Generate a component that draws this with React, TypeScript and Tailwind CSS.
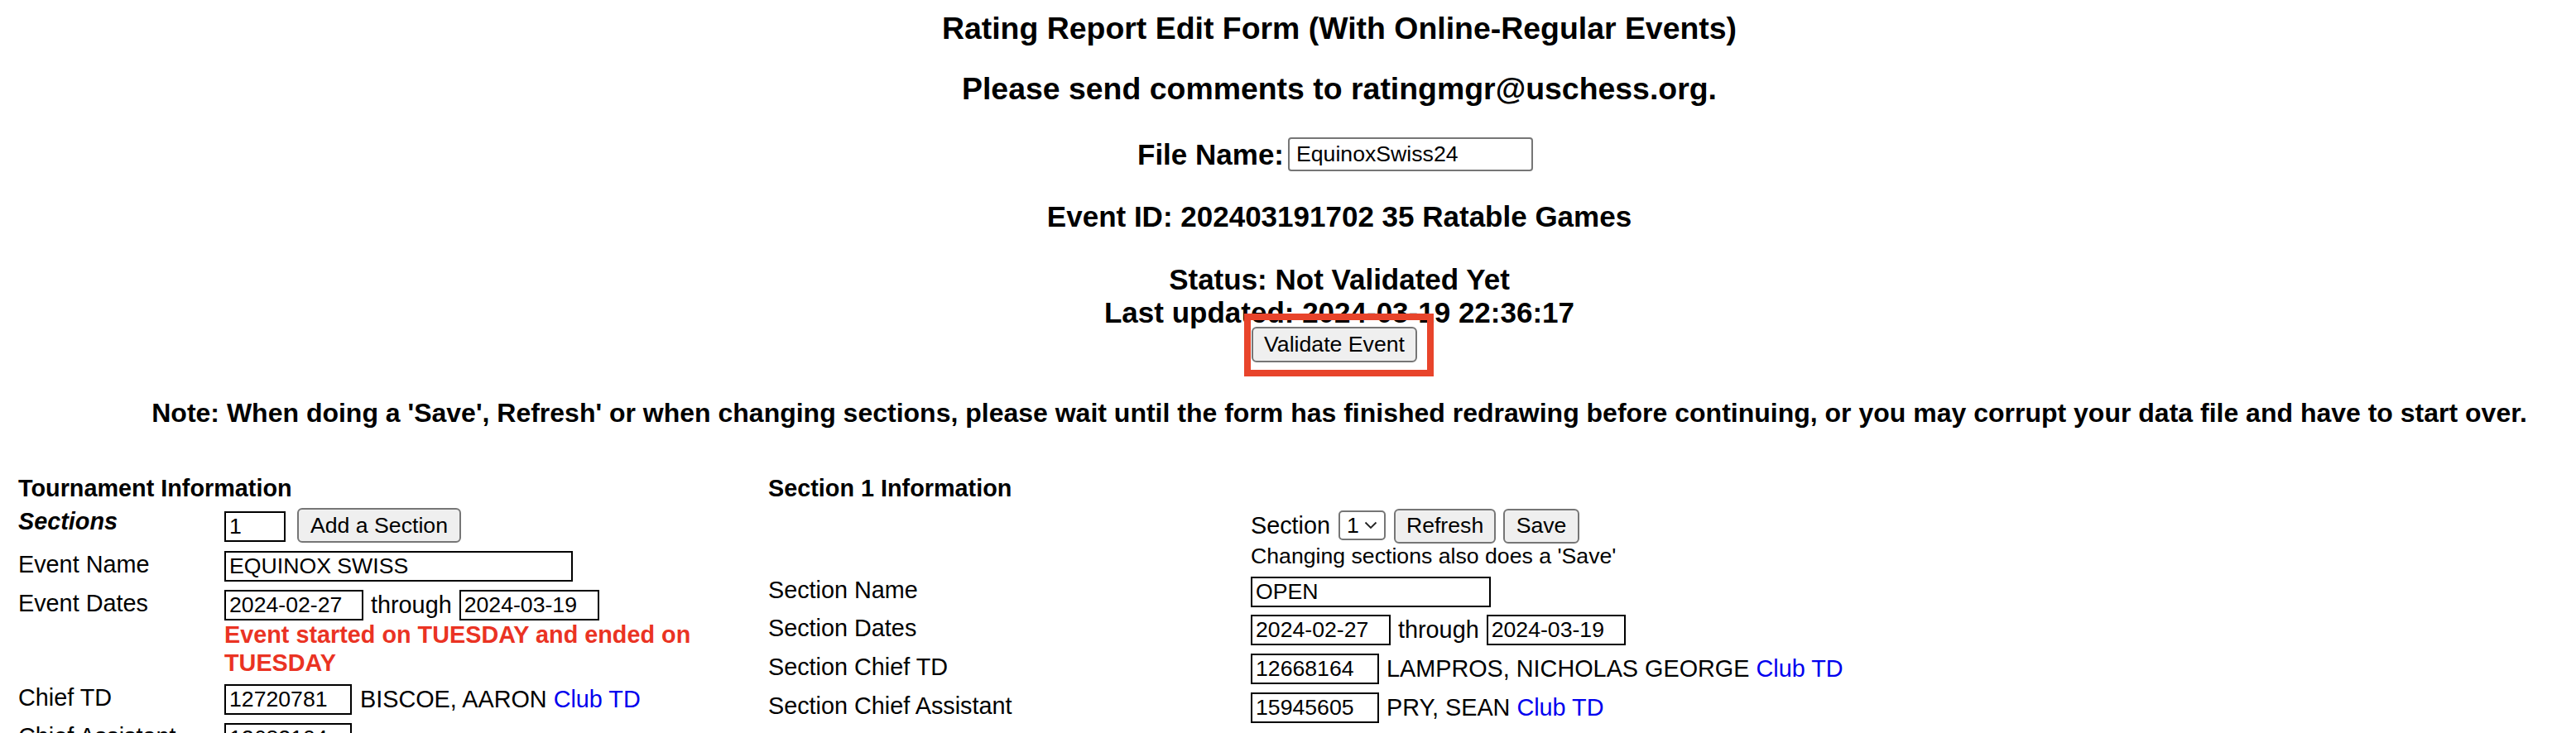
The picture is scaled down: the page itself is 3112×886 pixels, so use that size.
import React from 'react';

type BoxProps = { value: string; w: string };

// square black-bordered text box used throughout the rating form tables
function Box({ value, w }: BoxProps) {
  return (
    <input
      readOnly
      value={value}
      className={`${w} h-[37px] shrink-0 border-2 border-black bg-white px-[4px] text-[26.67px] leading-none text-black outline-none`}
    />
  );
}

function Btn({ label, w }: { label: string; w: string }) {
  return (
    <button className={`${w} h-[42px] shrink-0 rounded-[6px] border-2 border-[#767676] bg-[#efefef] text-[26.67px] leading-none text-black`}>
      {label}
    </button>
  );
}

function Label({ children, w }: { children: React.ReactNode; w: string }) {
  return <div className={`${w} shrink-0 text-[28.8px] leading-[33px]`}>{children}</div>;
}

function Club() {
  return <span className="text-[#0000ee]"> Club TD</span>;
}

export default function App() {
  return (
    <div className="relative h-[886px] w-full overflow-hidden bg-white text-black font-['Liberation_Sans',Arial,sans-serif]">
      <div className="w-[3236px]">
        {/* header block, centred */}
        <div className="flex flex-col items-center pt-[13px] font-bold">
          <h3 className="text-[37.44px] leading-[43px]">Rating Report Edit Form (With Online-Regular Events)</h3>
          <h3 className="mt-[30px] text-[37.44px] leading-[43px]">Please send comments to ratingmgr@uschess.org.</h3>
          <div className="mt-[37px] mr-[10px] flex h-[41px] items-center gap-[5px]">
            <span className="text-[35px] leading-[40px]">File Name:</span>
            <input
              readOnly
              value="EquinoxSwiss24"
              className="h-[41px] w-[296px] rounded-[4px] border-2 border-[#767676] px-[8px] text-[26.67px] font-normal outline-none"
            />
          </div>
          <div className="mt-[35px] text-[35px] leading-[40px]">Event ID: 202403191702 35 Ratable Games</div>
          <div className="mt-[36px] text-[35px] leading-[40px]">Status: Not Validated Yet</div>
          <div className="text-[35px] leading-[40px]">Last updated: 2024-03-19 22:36:17</div>
          <button className="mt-[-3px] mr-[12px] h-[43px] w-[200px] rounded-[6px] border-2 border-[#767676] bg-[#efefef] text-[26.67px] font-normal leading-none">
            Validate Event
          </button>
          <h4 className="mt-[43px] text-[32px] leading-[37px]">
            Note: When doing a 'Save', Refresh' or when changing sections, please wait until the form has finished redrawing before continuing, or you may corrupt your data file and have to start over.
          </h4>
        </div>

        {/* tournament / section tables */}
        <div className="mt-[56px] flex pl-[22px]">
          <div className="w-[905px] shrink-0">
            <div className="text-[28.8px] font-bold leading-[33px]">Tournament Information</div>
            <div className="mt-[7px] flex h-[42px] items-start">
              <Label w="w-[249px]">
                <span className="font-bold italic">Sections</span>
              </Label>
              <div className="flex items-center gap-[14px]">
                <div className="mt-[3px]">
                  <Box value="1" w="w-[74px]" />
                </div>
                <Btn label="Add a Section" w="w-[198px]" />
              </div>
            </div>
            <div className="mt-[10px] flex items-start">
              <Label w="w-[249px]">Event Name</Label>
              <Box value="EQUINOX SWISS" w="w-[421px]" />
            </div>
            <div className="mt-[10px] flex items-start">
              <Label w="w-[249px]">Event Dates</Label>
              <div className="w-[620px]">
                <div className="flex items-center text-[28.8px]">
                  <Box value="2024-02-27" w="w-[168px]" />
                  <span className="mx-[9px] leading-[33px]">through</span>
                  <Box value="2024-03-19" w="w-[169px]" />
                </div>
                <div className="text-[28.8px] font-bold leading-[34px] text-[#ea3323]">
                  Event started on TUESDAY and ended on TUESDAY
                </div>
              </div>
            </div>
            <div className="mt-[9px] flex items-start">
              <Label w="w-[249px]">Chief TD</Label>
              <div className="flex items-center text-[28.8px] leading-[33px]">
                <Box value="12720781" w="w-[154px]" />
                <span className="ml-[10px] whitespace-pre">
                  BISCOE, AARON<Club />
                </span>
              </div>
            </div>
            <div className="mt-[10px] flex items-start">
              <Label w="w-[249px]">Chief Assistant</Label>
              <Box value="12682104" w="w-[154px]" />
            </div>
          </div>

          <div className="pl-[1px]">
            <div className="text-[28.8px] font-bold leading-[33px]">Section 1 Information</div>
            <div className="mt-[7px] flex">
              <div className="w-[583px] shrink-0" />
              <div>
                <div className="flex h-[42px] items-center text-[28.8px]">
                  <span className="leading-[33px]">Section</span>
                  <div className="ml-[10px] flex h-[36px] w-[57px] items-center justify-between rounded-[5px] border-2 border-[#767676] bg-white pl-[8px] pr-[8px] text-[26.67px]">
                    <span>1</span>
                    <svg width="16" height="10" viewBox="0 0 16 10" fill="none">
                      <path d="M1.5 1.5 L8 8 L14.5 1.5" stroke="#222" strokeWidth="1.8" />
                    </svg>
                  </div>
                  <div className="ml-[10px]">
                    <Btn label="Refresh" w="w-[123px]" />
                  </div>
                  <div className="ml-[9px]">
                    <Btn label="Save" w="w-[92px]" />
                  </div>
                </div>
                <div className="text-[26.67px] leading-[33px]">Changing sections also does a 'Save'</div>
              </div>
            </div>
            <div className="mt-[8px] flex items-start">
              <Label w="w-[583px]">Section Name</Label>
              <Box value="OPEN" w="w-[290px]" />
            </div>
            <div className="mt-[9px] flex items-start">
              <Label w="w-[583px]">Section Dates</Label>
              <div className="flex items-center text-[28.8px]">
                <Box value="2024-02-27" w="w-[169px]" />
                <span className="mx-[9px] leading-[33px]">through</span>
                <Box value="2024-03-19" w="w-[168px]" />
              </div>
            </div>
            <div className="mt-[10px] flex items-start">
              <Label w="w-[583px]">Section Chief TD</Label>
              <div className="flex items-center text-[28.8px] leading-[33px]">
                <Box value="12668164" w="w-[155px]" />
                <span className="ml-[9px] whitespace-pre">
                  LAMPROS, NICHOLAS GEORGE<Club />
                </span>
              </div>
            </div>
            <div className="mt-[10px] flex items-start">
              <Label w="w-[583px]">Section Chief Assistant</Label>
              <div className="flex items-center text-[28.8px] leading-[33px]">
                <Box value="15945605" w="w-[155px]" />
                <span className="ml-[9px] whitespace-pre">
                  PRY, SEAN<Club />
                </span>
              </div>
            </div>
          </div>
        </div>
      </div>

      {/* red highlight drawn over the validate button */}
      <div className="pointer-events-none absolute left-[1503px] top-[379px] h-[76px] w-[229px] border-[8px] border-[#e8442b]" />
    </div>
  );
}
